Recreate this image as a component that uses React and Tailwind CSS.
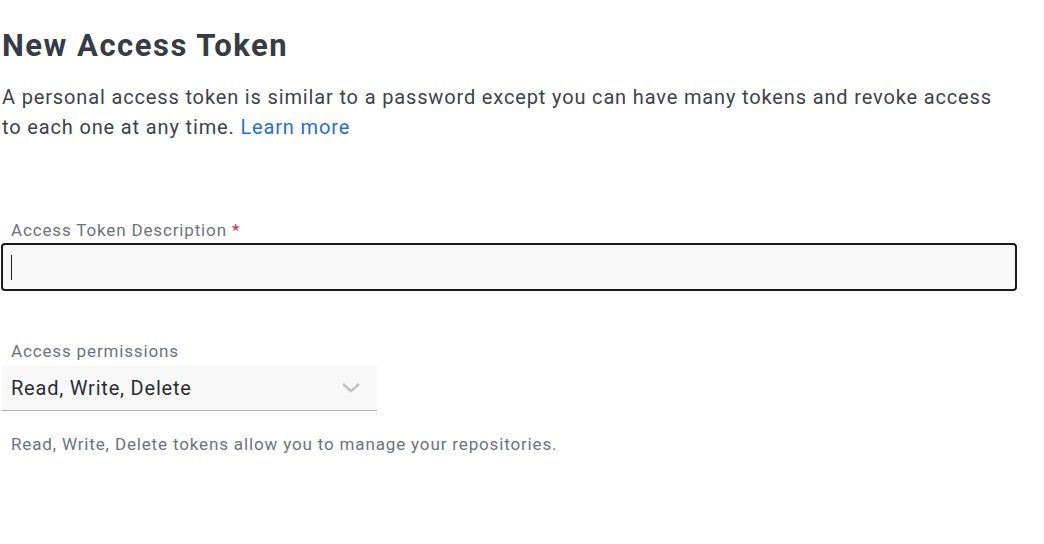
import React from "react";

export default function App() {
  return (
    <div className="w-[1044px] h-[544px] bg-white overflow-hidden" style={{ fontFamily: "Roboto, 'Noto Sans', sans-serif" }}>
      <div className="pl-[2px] pt-[26px] w-[1018px]">
        <h1 className="text-[31px] leading-[40px] font-bold text-[#363c44] tracking-[1.5px]">New Access Token</h1>
        <p className="mt-[16px] text-[20px] leading-[30px] text-[#3c434c] tracking-[0.85px] pr-[14px]">
          A personal access token is similar to a password except you can have many tokens and revoke access to each one at any time.{" "}
          <a className="text-[#1f6fd8]">Learn more</a>
        </p>

        <div className="mt-[76px]">
          <label className="block pl-[9px] text-[17px] leading-[24px] text-[#6b7380] tracking-[0.85px]">
            Access Token Description <span className="text-[#d3303a]">*</span>
          </label>
          <div className="mt-[1px] -ml-[1px] h-[48px] w-[1016px] rounded-[4px] border-2 border-[#1a1a1a] bg-[#f8f8f8] flex items-center pl-[8px]">
            <div className="w-[1px] h-[25px] bg-[#222]" />
          </div>
        </div>

        <div className="mt-[48px]">
          <label className="block pl-[9px] text-[17px] leading-[24px] text-[#6b7380] tracking-[0.85px]">Access permissions</label>
          <div className="mt-[3px] w-[375px] h-[45px] bg-[#f8f8f8] border-b border-[#b4b4b4] flex items-center justify-between pl-[9px] pr-[16px]">
            <span className="text-[20px] text-[#2a2f36] tracking-[0.8px]">Read, Write, Delete</span>
            <svg width="20" height="12" viewBox="0 0 20 12" fill="none">
              <path d="M2 2 L10 9 L18 2" stroke="#c4c4c4" strokeWidth="2.5" />
            </svg>
          </div>
          <p className="mt-[21px] pl-[9px] text-[17px] leading-[24px] text-[#6b7380] tracking-[0.85px]">
            Read, Write, Delete tokens allow you to manage your repositories.
          </p>
        </div>
      </div>
    </div>
  );
}
